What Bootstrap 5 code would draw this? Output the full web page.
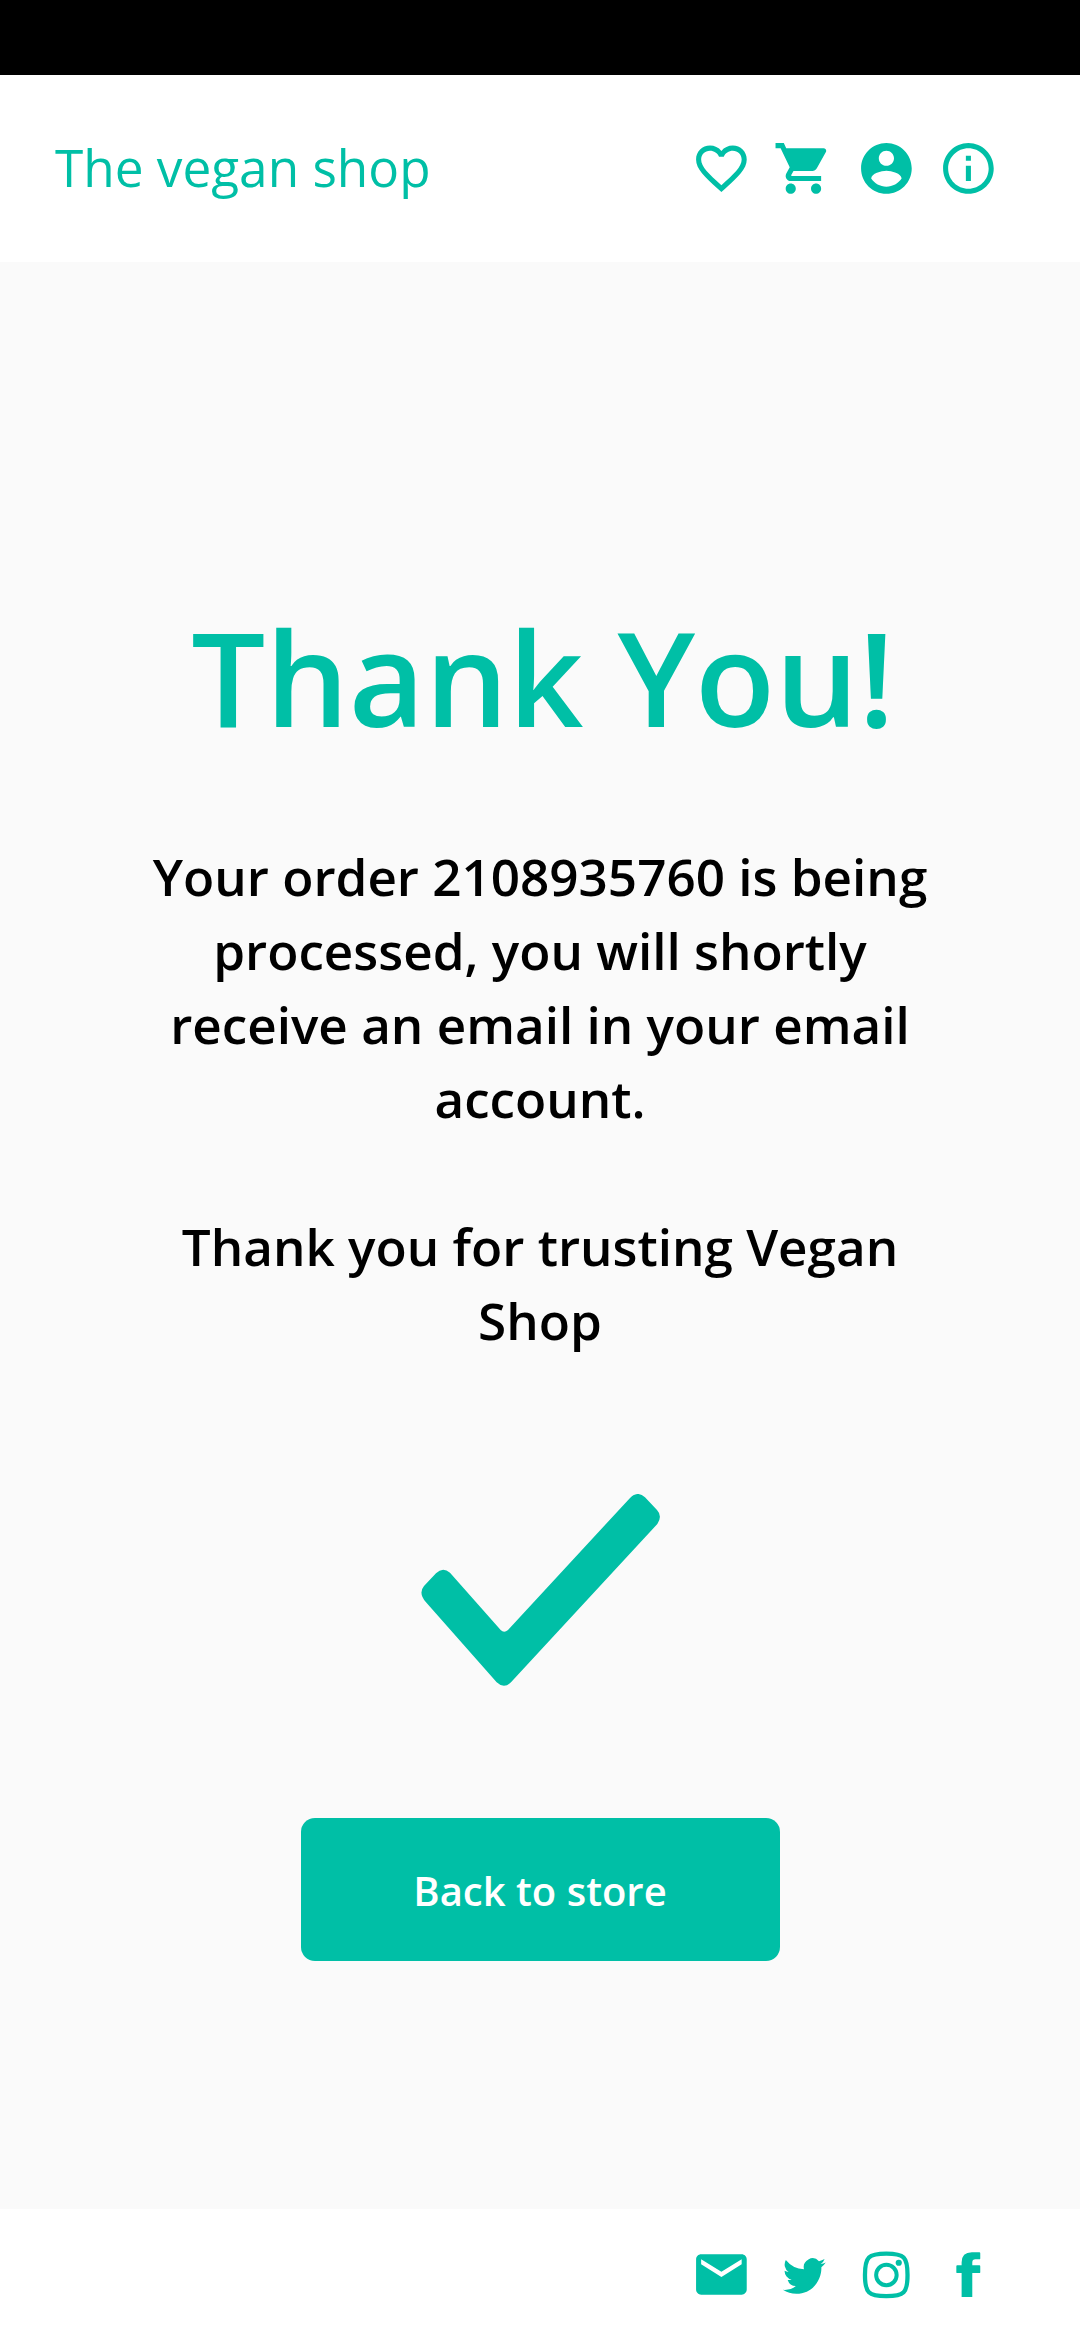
<!DOCTYPE html>
<html lang="en">
<head>
<meta charset="utf-8">
<meta name="viewport" content="width=device-width, initial-scale=1">
<title>The vegan shop</title>
<link href="https://cdn.jsdelivr.net/npm/bootstrap@5.3.0/dist/css/bootstrap.min.css" rel="stylesheet">
<style>
  :root { --shop: #00bfa6; }
  body { font-family: "Open Sans", sans-serif; background: #fafafa; color: #000; height: 2340px; overflow: hidden; }
  .status-strip { height: 75px; background: #000; }
  .shop-bar { height: 187px; padding: 0 81px 0 55px; color: var(--shop); }
  .shop-bar .navbar-brand { font-size: 51.3px; line-height: 72px; padding: 0 0 4px; margin: 0; color: var(--shop); }
  .icon-set { gap: 21.7px; color: var(--shop); }
  .icon-set a { color: inherit; display: block; width: 60.8px; height: 60.8px; }
  .icon-set svg { display: block; width: 100%; height: 100%; fill: currentColor; }
  .thanks-title { font-size: 131.2px; line-height: 182px; font-weight: 600; color: var(--shop); margin: 323px 0 0; padding-left: 6px; }
  .thanks-text { width: 810px; font-size: 51.2px; line-height: 74px; font-weight: 600; margin: 72px 0 0; }
  .thanks-text p { margin: 0 0 74px; }
  .check-mark { width: 239px; height: 192px; fill: var(--shop); margin-top: 63px; }
  .btn-shop { --bs-btn-color: #fff; --bs-btn-bg: var(--shop); --bs-btn-hover-bg: #00a892; --bs-btn-hover-color: #fff;
    width: 479px; height: 143px; border: 0; border-radius: 14px; font-size: 40px; font-weight: 600; padding: 8px 12px 6px; margin-top: 132px; }
  .shop-foot { height: 131px; padding: 0 81px 0 55px; }
</style>
</head>
<body class="d-flex flex-column">
  <div class="status-strip flex-shrink-0"></div>
  <header class="shop-bar bg-white flex-shrink-0 d-flex align-items-center justify-content-between">
    <a class="navbar-brand" href="#">The vegan shop</a>
    <nav class="icon-set d-flex">
      <a href="#" aria-label="Favourites"><svg viewBox="0 0 24 24"><path d="M16.5 3c-1.74 0-3.41.81-4.5 2.09C10.91 3.81 9.24 3 7.5 3 4.42 3 2 5.42 2 8.5c0 3.78 3.4 6.86 8.55 11.54L12 21.35l1.45-1.32C18.6 15.36 22 12.28 22 8.5 22 5.42 19.58 3 16.5 3zm-4.4 15.55l-.1.1-.1-.1C7.14 14.24 4 11.39 4 8.5 4 6.5 5.5 5 7.5 5c1.54 0 3.04.99 3.57 2.36h1.87C13.46 5.99 14.96 5 16.5 5c2 0 3.5 1.5 3.5 3.5 0 2.89-3.14 5.74-7.9 10.05z"/></svg></a>
      <a href="#" aria-label="Cart"><svg viewBox="0 0 24 24"><path d="M7 18c-1.1 0-1.99.9-1.99 2S5.9 22 7 22s2-.9 2-2-.9-2-2-2zM1 2v2h2l3.6 7.59-1.35 2.45c-.16.28-.25.61-.25.96 0 1.1.9 2 2 2h12v-2H7.42c-.14 0-.25-.11-.25-.25l.03-.12.9-1.63h7.45c.75 0 1.41-.41 1.75-1.03l3.58-6.49c.08-.14.12-.31.12-.48 0-.55-.45-1-1-1H5.21l-.94-2H1zm16 16c-1.1 0-1.99.9-1.99 2s.89 2 1.99 2 2-.9 2-2-.9-2-2-2z"/></svg></a>
      <a href="#" aria-label="Account"><svg viewBox="0 0 24 24"><path d="M12 2C6.48 2 2 6.48 2 12s4.48 10 10 10 10-4.48 10-10S17.520 2 12 2zm0 3c1.66 0 3 1.34 3 3s-1.34 3-3 3-3-1.34-3-3 1.34-3 3-3zm0 14.2c-2.5 0-4.71-1.28-6-3.220.03-1.990 4-3.080 6-3.080 1.990 0 5.970 1.090 6 3.080-1.290 1.940-3.500 3.220-6 3.220z"/></svg></a>
      <a href="#" aria-label="Information"><svg viewBox="0 0 24 24"><path d="M11 7h2v2h-2zm0 4h2v6h-2zm1-9C6.480 2 2 6.480 2 12s4.480 10 10 10 10-4.480 10-10S17.520 2 12 2zm0 18c-4.410 0-8-3.590-8-8s3.590-8 8-8 8 3.590 8 8-3.590 8-8 8z"/></svg></a>
    </nav>
  </header>

  <main class="flex-grow-1 d-flex flex-column align-items-center">
    <h1 class="thanks-title text-center">Thank You!</h1>
    <div class="thanks-text text-center">
      <p>Your order 2108935760 is being processed, you will shortly receive an email in your email account.</p>
      <p>Thank you for trusting Vegan Shop</p>
    </div>
    <svg class="check-mark flex-shrink-0" viewBox="63 72 717 576" role="img" aria-label="Done"><path d="M150 308L302 480Q312 490 324 480L688 86Q712 60 735 82L771 120Q788 138 772 162L333 637Q312 658 290 637L78 397Q54 370 72 348L108 310Q128 290 150 308Z"/></svg>
    <a class="btn btn-shop d-flex align-items-center justify-content-center" href="#">Back to store</a>
  </main>

  <footer class="shop-foot bg-white flex-shrink-0 d-flex align-items-center justify-content-end">
    <nav class="icon-set d-flex">
      <a href="#" aria-label="Mail"><svg viewBox="0 0 24 24"><path d="M20 4H4c-1.100 0-1.990.9-1.990 2L2 18c0 1.100.9 2 2 2h16c1.100 0 2-.9 2-2V6c0-1.100-.9-2-2-2zm0 4l-8 5-8-5V6l8 5 8-5v2z"/></svg></a>
      <a href="#" aria-label="Twitter"><svg viewBox="0 0 61 61"><path transform="translate(9.9 8.9) scale(2.690 2.740)" d="M5.026 15c6.038 0 9.341-5.003 9.341-9.334 0-.14 0-.282-.006-.422A6.685 6.685 0 0 0 16 3.542a6.658 6.658 0 0 1-1.889.518 3.301 3.301 0 0 0 1.447-1.817 6.533 6.533 0 0 1-2.087.793A3.286 3.286 0 0 0 7.875 6.030a9.325 9.325 0 0 1-6.767-3.429 3.289 3.289 0 0 0 1.018 4.382A3.323 3.323 0 0 1 .640 6.575v.045a3.288 3.288 0 0 0 2.632 3.218 3.203 3.203 0 0 1-.865.115 3.230 3.230 0 0 1-.614-.057 3.283 3.283 0 0 0 3.067 2.277A6.588 6.588 0 0 1 .780 13.580a6.320 6.320 0 0 1-.780-.045A9.344 9.344 0 0 0 5.026 15z"/></svg></a>
      <a href="#" aria-label="Instagram"><svg viewBox="0 0 61 61"><path d="M9 31C9 13 12.500 9.700 30.400 9.700S51.700 13 51.700 31 48.300 52.300 30.400 52.300 9 49 9 31Z" fill="none" stroke="currentColor" stroke-width="4.300"/><circle cx="30.500" cy="31.100" r="10.300" fill="none" stroke="currentColor" stroke-width="4"/><circle cx="42.900" cy="18.800" r="3.100"/></svg></a>
      <a href="#" aria-label="Facebook"><svg viewBox="0 0 61 61"><path d="M23.700 53.200V29.200H19.300Q18.400 29.200 18.400 28.300V22.300Q18.400 21.400 19.300 21.400H23.700V18.500Q23.700 8.300 34 8.300H41.500Q42.400 8.300 42.400 9.200V14.500Q42.400 15.400 41.500 15.400H37.500Q34.400 15.400 34.400 18.500V21.400H41.500Q42.400 21.400 42.400 22.300V28.300Q42.400 29.200 41.500 29.200H34.400V53.200Z"/></svg></a>
    </nav>
  </footer>
<script src="https://cdn.jsdelivr.net/npm/bootstrap@5.3.0/dist/js/bootstrap.bundle.min.js"></script>
</body>
</html>
